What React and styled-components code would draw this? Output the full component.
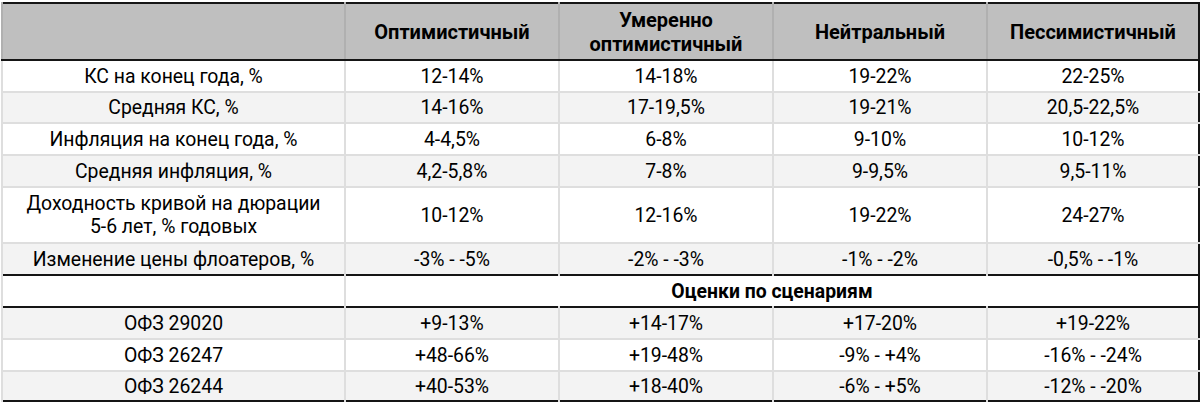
import React from "react";
import styled, { createGlobalStyle } from "styled-components";

const GlobalStyle = createGlobalStyle`
  body {
    margin: 0;
    background: #ffffff;
    font-family: Roboto, "Liberation Sans", sans-serif;
  }
`;

const Page = styled.div`
  padding: 2px 2px 0 1px;
`;

const Table = styled.table`
  width: 1197px;
  table-layout: fixed;
  border-collapse: collapse;
  border: 2px solid #151515;
  color: #000000;
  font-size: 19.4px;
`;

const HeadCell = styled.th`
  height: 55px;
  padding: 0 6px;
  background: #bfbfbf;
  border-left: 2px solid #b0b0b0;
  border-bottom: 2px solid #151515;
  font-size: 20px;
  font-weight: 700;
  line-height: 24px;
  text-align: center;
`;

const Row = styled.tr`
  background: ${(p) => (p.$shaded ? "#f3f3f3" : "#ffffff")};
  border-top: ${(p) => (p.$strong ? "2px solid #151515" : "2px solid #dedede")};
`;

const Cell = styled.td`
  height: ${(p) => p.$h || 30}px;
  padding: 0 6px;
  border-left: 2px solid #dedede;
  text-align: center;
  line-height: 23px;
  font-weight: ${(p) => (p.$bold ? 700 : 400)};
`;

const Label = styled.span`
  display: inline-block;
  max-width: ${(p) => p.$max || "none"};
`;

const scenarios = ["Оптимистичный", "Умеренно оптимистичный", "Нейтральный", "Пессимистичный"];

const macro = [
  ["КС на конец года, %", "12-14%", "14-18%", "19-22%", "22-25%"],
  ["Средняя КС, %", "14-16%", "17-19,5%", "19-21%", "20,5-22,5%"],
  ["Инфляция на конец года, %", "4-4,5%", "6-8%", "9-10%", "10-12%"],
  ["Средняя инфляция, %", "4,2-5,8%", "7-8%", "9-9,5%", "9,5-11%"],
  ["Доходность кривой на дюрации 5-6 лет, % годовых", "10-12%", "12-16%", "19-22%", "24-27%"],
  ["Изменение цены флоатеров, %", "-3% - -5%", "-2% - -3%", "-1% - -2%", "-0,5% - -1%"],
];

const bonds = [
  ["ОФЗ 29020", "+9-13%", "+14-17%", "+17-20%", "+19-22%"],
  ["ОФЗ 26247", "+48-66%", "+19-48%", "-9% - +4%", "-16% - -24%"],
  ["ОФЗ 26244", "+40-53%", "+18-40%", "-6% - +5%", "-12% - -20%"],
];

const macroHeights = [30, 29, 30, 30, 54, 30];
const bondHeights = [30, 30, 28];

export default function App() {
  return (
    <Page>
      <GlobalStyle />
      <Table>
        <colgroup>
          <col style={{ width: 343 }} />
          <col style={{ width: 214 }} />
          <col style={{ width: 214 }} />
          <col style={{ width: 214 }} />
          <col style={{ width: 212 }} />
        </colgroup>
        <thead>
          <tr>
            <HeadCell />
            {scenarios.map((s) => (
              <HeadCell key={s}>
                <Label $max={s.length > 15 ? "180px" : "none"}>{s}</Label>
              </HeadCell>
            ))}
          </tr>
        </thead>
        <tbody>
          {macro.map((r, i) => (
            <Row key={r[0]} $shaded={i % 2 === 1}>
              {r.map((c, j) => (
                <Cell key={j} $h={macroHeights[i]}>
                  {j === 0 && i === 4 ? <Label $max="315px">{c}</Label> : c}
                </Cell>
              ))}
            </Row>
          ))}
          <Row $strong>
            <Cell $h={30} />
            <Cell $h={30} colSpan={4} $bold>
              Оценки по сценариям
            </Cell>
          </Row>
          {bonds.map((r, i) => (
            <Row key={r[0]} $shaded={i % 2 === 0} $strong={i === 0}>
              {r.map((c, j) => (
                <Cell key={j} $h={bondHeights[i]}>
                  {c}
                </Cell>
              ))}
            </Row>
          ))}
        </tbody>
      </Table>
    </Page>
  );
}
